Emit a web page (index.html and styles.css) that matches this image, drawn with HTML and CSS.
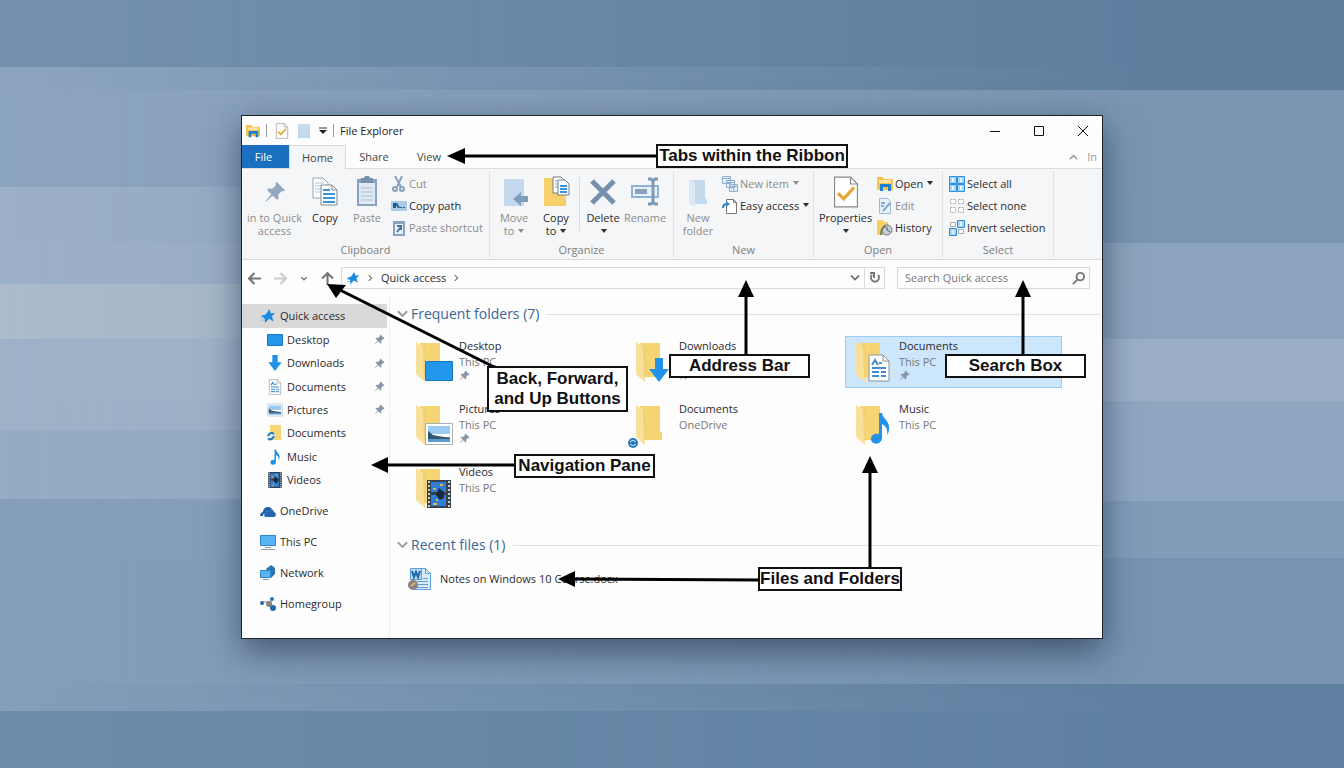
FILE: index.html
```html
<!DOCTYPE html>
<html lang="en">
<head>
  <meta charset="utf-8">
  <title>File Explorer</title>
  <link rel="stylesheet" href="styles.css">
</head>
<body>

  <!-- shared icons -->
  <svg class="defs" aria-hidden="true">
    <symbol id="pin" viewBox="0 0 24 24"><path fill="currentColor" d="M14 1L23 10L21 11.500L19.500 11L15.500 15L16 19L14 20.500L9.500 16L2 22.500L1.500 22L8 14.500L3.500 10L5 8L9 8.500L13 4.500L12.500 3Z"/></symbol>
    <symbol id="star" viewBox="0 0 16 16"><path fill="#1d8ce0" d="M9.500 1l1.200 4.200 4.500-.2-3.300 3.200 1.600 5.300-4.300-2.700-1.700 1.600L5 15l-.3-4.300L1 7.600l4.600-.9z"/><path stroke="#7dbdf0" d="M1 9.500h3M1 12h3"/></symbol>
    <symbol id="folder" viewBox="0 0 28 42"><path fill="#f5d473" d="M5 2h20v25l2 2v7H8z"/><path fill="#f9e09a" d="M1 1l7 5q2 1 2 4v31l-6-5q-3-2-3-4z"/><path fill="#e9c35d" d="M8 6h2v30H9z" opacity=".6"/></symbol>
    <symbol id="note" viewBox="0 0 20 32"><path fill="#2192e8" d="M9 1h3c1 6 8 8 7 16 0 3-1 4-2 6 1-6-1-9-5-11v13c0 9-11 8-11 2 0-5 5-6 8-5z"/></symbol>
    <symbol id="down" viewBox="0 0 20 24"><path fill="#2192e8" d="M6 0h8v11h6L10 24 0 11h6z"/></symbol>
    <symbol id="page" viewBox="0 0 22 28"><path fill="#fff" stroke="#8a929b" d="M1 1h14l6 6v20H1z"/><path fill="none" stroke="#8a929b" d="M15 1v6h6"/><path stroke="#3f8fd2" stroke-width="2" fill="none" d="M4 11l3-5 3 5M11 9h3M4 14h14M4 18h7M13 18h5M4 22h7M13 22h5"/></symbol>
    <symbol id="photo" viewBox="0 0 28 22"><path fill="#fff" stroke="#a9b1b9" d="M.5.5h27v21H.5z"/><path fill="#9ccbf2" d="M3 3h22v8H3z"/><path fill="#5b9dd0" d="M3 14h22v5H3z"/><path fill="#34596f" d="M3 8l5 4 5 1 12 2v1H3z"/></symbol>
    <symbol id="film" viewBox="0 0 24 28"><path fill="#37414e" d="M0 0h24v28H0z"/><path fill="#2f7fd6" d="M4 2h15v10H4zM4 15h15v11H4z"/><path stroke="#c8ced6" stroke-width="2" stroke-dasharray="2 2" d="M2 1v27M22 1v27"/><path stroke="#e8b04a" stroke-width="2" d="M6 9h3M13 5h3M9 20h2M14 17h3M6 24h4"/><path fill="#1c2938" d="M12 8l5 4v6l-4 2-4-5z"/></symbol>
    <symbol id="check" viewBox="0 0 22 28"><path fill="#fff" stroke="#888" d="M1 1h14l6 6v20H1z"/><path fill="none" stroke="#888" d="M15 1v6h6"/><path fill="none" stroke="#e5a83c" stroke-width="3" d="M4 15l5 5 9-10"/></symbol>
    <symbol id="chev" viewBox="0 0 12 8"><path fill="none" stroke="currentColor" stroke-width="2" d="M1 1l5 5 5-5"/></symbol>
    <symbol id="explorer" viewBox="0 0 16 16"><path fill="#f3c54f" d="M0 1h6l1 2h9v11H0z"/><path fill="#fae3a0" d="M2 4h12v3H2z"/><path fill="#1d7fd3" d="M3 8h11v7h-3v-4H6v4H3z"/></symbol>
    <symbol id="docs" viewBox="0 0 28 32"><path fill="#fff" stroke="#9aa3ad" d="M2 2h10l5 5v15H2z"/><path stroke="#a9c3dd" d="M4 7h9M4 10h10M4 13h10M4 16h10"/><path fill="#fff" stroke="#7f8994" d="M10 9h11l5 5v15H10z"/><path fill="none" stroke="#7f8994" d="M21 9v5h5"/><path stroke="#3b93dc" stroke-width="2" d="M12 14h7M12 18h12M12 22h12M12 26h12"/></symbol>
  </svg>

  <main class="window">

    <header class="titlebar">
      <svg class="i14"><use href="#explorer"/></svg>
      <span class="bar"></span>
      <svg class="i14 tb-check"><use href="#check"/></svg>
      <svg class="i14 tb-new" viewBox="0 0 14 14"><path fill="#c5daee" d="M1 0h12v14H1z"/></svg>
      <svg class="tb-more" viewBox="0 0 8 8"><path stroke="#333" d="M0 1h8"/><path fill="#222" d="M0 3h8L4 7z"/></svg>
      <span class="bar"></span>
      <h1>File Explorer</h1>
      <div class="window-buttons">
        <button aria-label="Minimize"><svg viewBox="0 0 12 12"><path d="M1 6.500h10"/></svg></button>
        <button aria-label="Maximize"><svg viewBox="0 0 12 12"><path d="M1.500 1.500h9v9h-9z"/></svg></button>
        <button aria-label="Close"><svg viewBox="0 0 12 12"><path d="M1 1l10 10M11 1L1 11"/></svg></button>
      </div>
    </header>

    <nav class="tabs">
      <button class="tab tab-file">File</button>
      <button class="tab tab-active">Home</button>
      <button class="tab">Share</button>
      <button class="tab">View</button>
      <span class="tabs-end"><svg class="up-chev"><use href="#chev"/></svg>In</span>
    </nav>

    <section class="ribbon">
      <div class="group g-clipboard">
        <div class="tools">
          <button class="big wide off"><svg class="big-pin"><use href="#pin"/></svg>in to Quick access</button>
          <button class="big"><svg><use href="#docs"/></svg>Copy</button>
          <button class="big off"><svg viewBox="0 0 24 32"><path fill="#8ba3c0" d="M2 3h20v27H2z"/><path fill="#dfeaf5" d="M4 7h16v21H4z"/><path fill="#7990ab" d="M6 2h3l1-2h4l1 2h3v5H6z"/><path stroke="#a6bdd5" d="M6 12h12M6 16h12M6 20h12M6 24h12"/></svg>Paste</button>
          <div class="smalls">
            <button class="small off"><svg viewBox="0 0 16 16"><path fill="none" stroke="#88a3c0" stroke-width="2" d="M4 0l6 11M11 0L6 11"/><circle cx="4" cy="13" r="2" fill="none" stroke="#88a3c0" stroke-width="2"/><circle cx="11" cy="13" r="2" fill="none" stroke="#88a3c0" stroke-width="2"/></svg>Cut</button>
            <button class="small"><svg viewBox="0 0 16 16"><path fill="#a8cbea" d="M0 3h16v10H0z"/><path fill="#225a8c" d="M2 5h4l3 5H7L5 7v3H2zM9 9h2v1H9zM12 9h2v1h-2z"/></svg>Copy path</button>
            <button class="small off"><svg viewBox="0 0 16 16"><path fill="#8ba3c0" d="M2 1h12v15H2z"/><path fill="#e6eff8" d="M4 4h8v10H4z"/><path stroke="#4f7298" stroke-width="2" fill="none" d="M6 12l4-5M6 6h4v4"/></svg>Paste shortcut</button>
          </div>
        </div>
        <div class="group-name">Clipboard</div>
      </div>

      <div class="group g-organize">
        <div class="tools">
          <button class="big off"><svg viewBox="0 0 28 32"><path fill="#c3d8ec" d="M4 3h20v27H4z"/><path fill="#7f9cbb" d="M13 23l8-7v4h7v6h-7v4z"/></svg><span>Move<br>to <i class="caret"></i></span></button>
          <button class="big"><svg viewBox="0 0 28 32"><path fill="#f5d06c" d="M2 2h12v4h10v24H2z"/><path fill="#fff" stroke="#777f88" d="M11 1h8l3 3v13H11z"/><path stroke="#5da3df" d="M13 5h6M13 8h6M13 11h6"/><path fill="#fff" stroke="#777f88" d="M16 4h7l4 4v11H16z"/><path stroke="#3b93dc" stroke-width="2" d="M18 10h7M18 13h7M18 16h7"/></svg><span>Copy<br>to <i class="caret"></i></span></button>
          <span class="divider"></span>
          <button class="big"><svg viewBox="0 0 28 32"><path stroke="#7590ad" stroke-width="5" d="M3 5l22 22M25 5L3 27"/></svg><span>Delete<br><i class="caret"></i></span></button>
          <button class="big off"><svg viewBox="0 0 28 32"><path fill="#e8f1fa" stroke="#8fb3d6" stroke-width="2" d="M1 10h26v11H1z"/><path fill="#8aa3be" d="M4 13h12v5H4z"/><path fill="none" stroke="#7e99b6" stroke-width="3" d="M17 3h3l2 2 2-2h3M22 4v23M17 28h3l2-2 2 2h3"/></svg>Rename</button>
        </div>
        <div class="group-name">Organize</div>
      </div>

      <div class="group g-new">
        <div class="tools">
          <button class="big off"><svg viewBox="0 0 28 32"><path fill="#c5d9ed" d="M6 4h15v18l2 2v4H8z"/><path fill="#dbe8f5" d="M5 3l6 4v24l-6-3z"/></svg>New folder</button>
          <div class="smalls">
            <button class="small off"><svg viewBox="0 0 16 16"><path fill="#e5eff9" stroke="#8fb0d2" d="M.5.500h8v7h-8zM4.500 4.500h8v7h-8zM7.500 8.500h8v7h-8z"/><path stroke="#8fb0d2" d="M1 2.500h7M5 6.500h7M8 10.500h7M11.500 11v4"/></svg>New item <i class="caret"></i></button>
            <button class="small"><svg viewBox="0 0 16 16"><path fill="#fff" stroke="#777" d="M4.500 1.500h7l3 3v11h-10z"/><path fill="none" stroke="#777" d="M11.500 1.500v3h3"/><path fill="none" stroke="#3c83bf" stroke-width="2" d="M1 10c0-3 1-4 4-4"/><path fill="#3c83bf" d="M4 3l4 3-4 3z"/></svg>Easy access <i class="caret"></i></button>
          </div>
        </div>
        <div class="group-name">New</div>
      </div>

      <div class="group g-open">
        <div class="tools">
          <button class="big wide"><svg><use href="#check"/></svg><span>Properties<br><i class="caret"></i></span></button>
          <div class="smalls">
            <button class="small"><svg><use href="#explorer"/></svg>Open <i class="caret"></i></button>
            <button class="small off"><svg viewBox="0 0 16 16"><path fill="#e8f1fa" stroke="#9cbbdb" d="M2.500.500h8l3 3v12h-11z"/><path stroke="#86a7cb" stroke-width="2" d="M4 5h4M4 8h3M6 13l7-8"/></svg>Edit</button>
            <button class="small"><svg viewBox="0 0 16 16"><path fill="#f5cf62" d="M0 0h6l1 2h4v13H0z"/><circle cx="10" cy="10" r="5" fill="#c9d0d4" stroke="#70797f"/><path fill="none" stroke="#50585e" d="M10 7v3l3 2"/><path fill="none" stroke="#70797f" stroke-width="2" d="M4 15c0-5 1-8 5-9"/></svg>History</button>
          </div>
        </div>
        <div class="group-name">Open</div>
      </div>

      <div class="group g-select">
        <div class="tools">
          <div class="smalls">
            <button class="small"><svg viewBox="0 0 16 16"><path fill="#a9d5f8" stroke="#2d8ddb" d="M.5.500h7v7h-7zM8.500.500h7v7h-7zM.5 8.500h7v7h-7zM8.500 8.500h7v7h-7z"/><path fill="#e7f4fe" d="M3 2h2v4H3zM11 2h2v4h-2zM3 10h2v4H3zM11 10h2v4h-2z"/></svg>Select all</button>
            <button class="small"><svg viewBox="0 0 16 16"><path fill="#fff" stroke="#aaa" stroke-dasharray="2 1" d="M1.500 1.500h5v4h-5zM9.500 1.500h5v4h-5zM1.500 9.500h5v5h-5zM9.500 9.500h5v5h-5z"/></svg>Select none</button>
            <button class="small"><svg viewBox="0 0 16 16"><path fill="#fff" stroke="#aaa" d="M1.500 2.500h5v4h-5zM9.500 9.500h5v4h-5z"/><path fill="#a9d5f8" stroke="#2d8ddb" d="M8.500.500h7v7h-7zM.5 8.500h7v7h-7z"/><path fill="#e7f4fe" d="M11 2h2v4h-2zM3 10h2v4H3z"/></svg>Invert selection</button>
          </div>
        </div>
        <div class="group-name">Select</div>
      </div>
    </section>

    <section class="location">
      <div class="history">
        <button aria-label="Back"><svg viewBox="0 0 12 12"><path d="M12 6H1M6 1L1 6l5 5"/></svg></button>
        <button class="dim" aria-label="Forward"><svg viewBox="0 0 12 12"><path d="M0 6h11M6 1l5 5-5 5"/></svg></button>
        <button class="recent" aria-label="Recent locations"><svg viewBox="0 0 12 12"><path d="M2 4l4 4 4-4"/></svg></button>
        <button aria-label="Up"><svg viewBox="0 0 12 12"><path d="M6 12V1M1 6l5-5 5 5"/></svg></button>
      </div>
      <div class="address">
        <svg class="i14"><use href="#star"/></svg>
        <svg class="crumb-sep"><use href="#chev"/></svg>
        <a href="#">Quick access</a>
        <svg class="crumb-sep"><use href="#chev"/></svg>
        <button class="drop" aria-label="Previous locations"><svg><use href="#chev"/></svg></button>
        <button class="refresh" aria-label="Refresh"><svg viewBox="0 0 14 14"><path d="M4 4a4 4 0 1 0 6 0M2 2h4v5"/></svg></button>
      </div>
      <label class="search">
        <input type="text" placeholder="Search Quick access" aria-label="Search Quick access">
        <svg viewBox="0 0 14 14"><circle cx="9" cy="5" r="4"/><path d="M6 8l-5 5"/></svg>
      </label>
    </section>

    <div class="panes">
      <nav class="sidebar">
        <a href="#" class="quick"><svg><use href="#star"/></svg>Quick access</a>
        <div class="pinned">
          <a href="#"><svg viewBox="0 0 16 16"><path fill="#2196ea" stroke="#1778c2" d="M.5 2.500h15v11H.5z"/></svg>Desktop<svg class="pin"><use href="#pin"/></svg></a>
          <a href="#"><svg><use href="#down"/></svg>Downloads<svg class="pin"><use href="#pin"/></svg></a>
          <a href="#"><svg><use href="#page"/></svg>Documents<svg class="pin"><use href="#pin"/></svg></a>
          <a href="#"><svg><use href="#photo"/></svg>Pictures<svg class="pin"><use href="#pin"/></svg></a>
          <a href="#"><svg viewBox="0 0 16 16"><path fill="#f7d774" d="M3 0h11v13l1 2H3z"/><circle cx="4" cy="11" r="4" fill="#dcebf7"/><path fill="none" stroke="#2a78b8" stroke-width="2" d="M1 11c1-3 4-4 6-2M7 11c-1 3-3 4-6 3"/></svg>Documents</a>
          <a href="#"><svg><use href="#note"/></svg>Music</a>
          <a href="#"><svg><use href="#film"/></svg>Videos</a>
        </div>
        <div class="roots">
          <a href="#"><svg viewBox="0 0 16 16"><path fill="#1f5fa6" d="M0 13c0-3 2-4 3-4 0-4 5-7 9-3l-3 1c-2 1-3 2-3 3-2 0-3 1-3 3z"/><path fill="#2467b0" d="M5 14c-2-3 0-5 2-5 1-4 6-4 7 0 3 1 2 5 0 5z"/></svg>OneDrive</a>
          <a href="#"><svg viewBox="0 0 16 16"><path fill="#58b4f5" stroke="#2f86cc" d="M.5 1.500h15v10H.5z"/><path stroke="#8d9aa6" d="M5 13.500h6M1 15.500h14"/></svg>This PC</a>
          <a href="#"><svg viewBox="0 0 16 16"><path fill="#2c74b4" d="M6 4l5-4 4 3v6l-4 4z"/><path fill="#5cb2ee" stroke="#2f86cc" d="M.5 5.500h10v7H.5z"/><path stroke="#8d9aa6" d="M3 14.500h6"/></svg>Network</a>
          <a href="#"><svg viewBox="0 0 16 16"><path stroke="#88a" d="M3 6l7 0M11 2v8"/><circle cx="2" cy="7" r="2" fill="#2268a8"/><circle cx="12" cy="3" r="2" fill="#2a75b8"/><circle cx="9" cy="8" r="3" fill="#8a8580"/><circle cx="13" cy="12" r="3" fill="#2268a8"/></svg>Homegroup</a>
        </div>
      </nav>

      <section class="content">
        <h2><svg><use href="#chev"/></svg>Frequent folders (7)</h2>
        <div class="folders">
          <a href="#" class="folder">
            <span class="thumb"><svg class="base"><use href="#folder"/></svg><svg class="badge screen" viewBox="0 0 28 20"><path fill="#2196ea" stroke="#1778c2" d="M.5.500h27v19H.5z"/></svg></span>
            <span class="info">Desktop<small>This PC</small><svg class="pin"><use href="#pin"/></svg></span>
          </a>
          <a href="#" class="folder">
            <span class="thumb"><svg class="base"><use href="#folder"/></svg><svg class="badge arrow"><use href="#down"/></svg></span>
            <span class="info">Downloads<small>&nbsp;</small><svg class="pin"><use href="#pin"/></svg></span>
          </a>
          <a href="#" class="folder selected">
            <span class="thumb"><svg class="base"><use href="#folder"/></svg><svg class="badge doc"><use href="#page"/></svg></span>
            <span class="info">Documents<small>This PC</small><svg class="pin"><use href="#pin"/></svg></span>
          </a>
          <a href="#" class="folder">
            <span class="thumb"><svg class="base"><use href="#folder"/></svg><svg class="badge screen"><use href="#photo"/></svg></span>
            <span class="info">Pictures<small>This PC</small><svg class="pin"><use href="#pin"/></svg></span>
          </a>
          <a href="#" class="folder">
            <span class="thumb"><svg class="base"><use href="#folder"/></svg><svg class="badge sync" viewBox="0 0 10 10"><circle cx="5" cy="5" r="5" fill="#2a78b8"/><path fill="none" stroke="#fff" d="M2 4c2-2 4-2 6 0M8 6c-2 2-4 2-6 0"/></svg></span>
            <span class="info">Documents<small>OneDrive</small></span>
          </a>
          <a href="#" class="folder">
            <span class="thumb"><svg class="base"><use href="#folder"/></svg><svg class="badge music"><use href="#note"/></svg></span>
            <span class="info">Music<small>This PC</small></span>
          </a>
          <a href="#" class="folder">
            <span class="thumb"><svg class="base"><use href="#folder"/></svg><svg class="badge movie"><use href="#film"/></svg></span>
            <span class="info">Videos<small>This PC</small></span>
          </a>
        </div>

        <h2 class="recent-title"><svg><use href="#chev"/></svg>Recent files (1)</h2>
        <a href="#" class="file">
          <svg viewBox="0 0 24 24"><path fill="#d9ebf9" stroke="#5d9fd6" d="M6.500 1.500h11l5 5v16h-16z"/><path fill="none" stroke="#5d9fd6" d="M17.500 1.500v5h5M9 14.500h11M9 17.500h11M9 20.500h11M15 11.500h5"/><path fill="#bcdcf6" stroke="#5d9fd6" d="M2.500 1.500h11v11h-11z"/><path fill="none" stroke="#1c66ab" stroke-width="2" d="M4 4l2 6 2-5 2 5 2-6"/><circle cx="5" cy="18" r="5" fill="#848484"/><path stroke="#e4b863" stroke-width="2" d="M3 19l4-3"/></svg>
          Notes on Windows 10 Course.docx
        </a>
      </section>
    </div>

    <!-- callouts drawn over the window -->
    <svg class="arrows" width="860" height="523" viewBox="0 0 860 523">
      <path class="line" d="M220 40H415M98 174L254 252M504 178V240M781 178V240M628 354V452M330 463L517 464M144 349H273"/>
      <path d="M205 40l18-8v16zM85 168l19 1-10 13zM504 164l-8 17h16zM781 164l-8 17h16zM628 340l-8 17h16zM316 463l17-8v16zM129 349l17-8v16z"/>
    </svg>
    <div class="callout c-tabs">Tabs within the Ribbon</div>
    <div class="callout c-back">Back, Forward,<br>and Up Buttons</div>
    <div class="callout c-address">Address Bar</div>
    <div class="callout c-search">Search Box</div>
    <div class="callout c-nav">Navigation Pane</div>
    <div class="callout c-files">Files and Folders</div>
  </main>

</body>
</html>
```
FILE: styles.css
```css
* {
  box-sizing: border-box;
}

body {
  position: relative;
  min-height: 100vh;
  margin: 0;
  padding: 115px 241px 60px;
  font: 11px/16px "Open Sans", "Noto Sans", sans-serif;
  color: #2b2b2b;
  background: linear-gradient(#7591af 67px, #8da5c0 67px 187px, #9cb0c8 187px 284px, #acbccd 284px 339px, #9fb2c8 339px 430px, #96abc4 430px 499px, #859fbb 499px 711px, #6d8dab 711px);
}

/* right hand stripes, faded in over the left ones */
body::before {
  content: "";
  position: absolute;
  inset: 0;
  background: linear-gradient(#5e7e9e 90px, #7a95b1 90px 243px, #8ba3bc 243px 339px, #9aafc5 339px 401px, #8fa6c0 401px 501px, #819cb9 501px 558px, #7793b1 558px 684px, #5f80a1 684px);
  mask-image: linear-gradient(to right, transparent, #000 85%);
}

a {
  color: inherit;
  text-decoration: none;
}

button {
  padding: 0;
  border: 0;
  background: none;
  font: inherit;
  color: inherit;
}

svg {
  flex: none;
}

.defs {
  position: absolute;
  width: 0;
  height: 0;
}

.window {
  position: relative;
  border: 1px solid #1d232b;
  background: #fdfdfd;
  box-shadow: 0 12px 32px rgba(25, 42, 68, .6);
}

/* title bar */
.titlebar {
  display: flex;
  align-items: center;
  gap: 6px;
  height: 29px;
  padding: 0 9px 0 4px;
}

.titlebar h1 {
  margin: 0;
  font-size: 11px;
  font-weight: normal;
  color: #222;
}

.i14 {
  width: 14px;
  height: 14px;
}

.tb-check {
  height: 16px;
  margin: 0 2px;
}

.tb-more {
  width: 8px;
  height: 8px;
  margin: 0 0 0 2px;
}

.bar {
  width: 1px;
  height: 13px;
  background: #999;
}

.window-buttons {
  display: flex;
  gap: 24px;
  margin-left: auto;
}

.window-buttons button {
  width: 20px;
  height: 20px;
}

.window-buttons svg {
  display: block;
  width: 12px;
  margin: auto;
  fill: none;
  stroke: #111;
}

/* tabs */
.tabs {
  display: flex;
  height: 24px;
  border-bottom: 1px solid #dadbdc;
}

.tab {
  width: 54px;
  margin-left: 1px;
  color: #444;
}

.tab-file {
  width: 47px;
  margin: 0;
  padding-right: 4px;
  background: #1a6fc0;
  color: #fff;
}

.tab-active {
  width: 57px;
  height: 24px;
  margin: 0;
  border: 1px solid #dadbdc;
  border-bottom: 0;
  background: #f5f6f7;
}

.tabs-end {
  display: flex;
  align-items: center;
  gap: 9px;
  margin-left: auto;
  padding-right: 5px;
  color: #999;
}

.up-chev {
  width: 9px;
  height: 6px;
  transform: rotate(180deg);
}

/* ribbon */
.ribbon {
  display: flex;
  height: 91px;
  padding: 2px 0;
  border-bottom: 1px solid #dadbdc;
  background: #f5f6f7;
}

.group {
  border-right: 1px solid #e0e1e3;
}

.g-clipboard { width: 248px; }
.g-organize { width: 184px; }
.g-new { width: 140px; }
.g-open { width: 129px; }
.g-select { width: 111px; }

.tools {
  display: flex;
  height: 71px;
  padding-left: 3px;
}

.big {
  display: flex;
  flex-direction: column;
  align-items: center;
  width: 42px;
  padding-top: 5px;
  line-height: 13px;
}

.big.wide {
  width: 59px;
}

.g-open .big.wide {
  width: 57px;
}

.big svg {
  width: 28px;
  height: 32px;
  margin-bottom: 3px;
}

.big .big-pin {
  width: 22px;
  height: 22px;
  margin: 5px 0 8px;
  color: #94a9c2;
}

.off {
  color: #8c8c8c;
}

.smalls {
  padding: 2px 0 0 3px;
}

.small {
  display: flex;
  align-items: center;
  height: 22px;
  white-space: pre;
}

.small svg {
  width: 16px;
  height: 16px;
  margin-right: 2px;
}

.caret {
  display: inline-block;
  margin: 0 0 2px 1px;
  border: 3px solid transparent;
  border-top: 4px solid currentColor;
  border-bottom: 0;
}

.divider {
  width: 1px;
  height: 54px;
  margin: 6px 2px 0;
  background: #dcdddf;
}

.group-name {
  text-align: center;
  color: #808080;
}

/* address row */
.location {
  display: flex;
  gap: 12px;
  padding: 7px 12px 7px 6px;
}

.history {
  display: flex;
  align-items: center;
  gap: 13px;
  margin-right: -5px;
}

.history button,
.history svg {
  display: block;
  width: 13px;
  height: 13px;
}

.history svg,
.refresh svg,
.search svg {
  fill: none;
  stroke: #777;
  stroke-width: 2;
}

.history .recent,
.recent svg {
  width: 8px;
}

.history .dim svg {
  stroke: #ccc;
}

.address {
  display: flex;
  flex: 1;
  align-items: center;
  height: 22px;
  padding-left: 4px;
  border: 1px solid #d9d9d9;
}

.crumb-sep {
  width: 7px;
  height: 6px;
  margin: 0 7px;
  color: #777;
  transform: rotate(-90deg);
}

.drop {
  width: 18px;
  height: 20px;
  margin-left: auto;
}

.drop svg {
  display: block;
  width: 10px;
  height: 8px;
  margin: auto;
  color: #666;
}

.refresh {
  width: 20px;
  height: 20px;
  border-left: 1px solid #d9d9d9;
}

.refresh svg {
  display: block;
  width: 14px;
  margin: auto;
}

.search {
  display: flex;
  align-items: center;
  width: 193px;
  height: 22px;
  padding: 0 4px 0 7px;
  border: 1px solid #d9d9d9;
}

.search input {
  flex: 1;
  min-width: 0;
  padding: 0;
  border: 0;
  outline: 0;
  background: none;
  font: inherit;
}

.search input::placeholder {
  color: #777;
}

.search svg {
  width: 13px;
  height: 13px;
}

/* navigation pane */
.panes {
  display: flex;
}

.sidebar {
  width: 148px;
  padding: 8px 2px 19px 0;
  border-right: 1px solid #eee;
}

.sidebar a {
  display: flex;
  align-items: center;
  gap: 4px;
  padding-left: 18px;
}

.sidebar a svg {
  width: 16px;
  height: 16px;
}

.sidebar .quick {
  height: 24px;
  background: #d9d9d9;
}

.pinned {
  display: grid;
  grid-auto-rows: 1fr;
  height: 164px;
}

.sidebar .pinned a {
  padding-left: 25px;
}

.sidebar a .pin {
  margin-left: auto;
  margin-right: 2px;
}

.sidebar a .pin,
.info .pin {
  width: 11px;
  height: 11px;
  color: #8996a5;
}

.roots {
  margin-top: 3px;
}

.roots a {
  height: 31px;
}

/* folders and files */
.content {
  flex: 1;
  padding: 6px 2px 0 7px;
}

h2 {
  display: flex;
  align-items: center;
  margin: 0 0 10px;
  font-size: 14px;
  font-weight: normal;
  line-height: 24px;
  color: #3d6595;
}

h2 svg {
  width: 11px;
  height: 8px;
  margin-right: 3px;
  color: #999;
}

h2::after {
  content: "";
  flex: 1;
  height: 1px;
  margin-left: 7px;
  background: #dfe1e4;
}

.folders {
  display: grid;
  grid-template-columns: repeat(3, 217px);
  grid-auto-rows: 52px;
  gap: 11px 3px;
  padding-left: 8px;
}

.folder {
  display: flex;
  padding: 1px 9px;
  border: 1px solid transparent;
}

.folder.selected {
  border-color: #99cdf5;
  background: #cce6fc;
}

.thumb {
  position: relative;
  width: 44px;
  padding-top: 3px;
}

.base {
  width: 28px;
  height: 42px;
}

/* small picture laid over the folder */
.badge {
  position: absolute;
  left: 10px;
  bottom: 4px;
  width: 28px;
  height: 28px;
}

.badge.screen {
  height: 22px;
}

.badge.arrow {
  left: 14px;
  width: 20px;
  height: 24px;
}

.badge.music {
  left: 15px;
  width: 20px;
  height: 34px;
}

.badge.sync {
  left: -7px;
  bottom: 1px;
  width: 10px;
  height: 10px;
}

.info small {
  display: block;
  font-size: 11px;
  color: #777;
}

.info .pin {
  display: block;
}

.recent-title {
  margin-top: 19px;
}

.file {
  display: flex;
  align-items: center;
  gap: 8px;
  padding-left: 11px;
}

.file svg {
  width: 24px;
  height: 24px;
}

/* callouts */
.arrows,
.callout {
  position: absolute;
}

.arrows {
  top: 0;
  left: 0;
  pointer-events: none;
}

.line {
  fill: none;
  stroke: #000;
  stroke-width: 3;
}

.callout {
  width: 141px;
  border: 2px solid #111;
  background: #fff;
  font: bold 17px/20px "Liberation Sans", Arial, sans-serif;
  color: #111;
  text-align: center;
  white-space: nowrap;
}

.c-tabs { top: 28px; left: 414px; width: 192px; }
.c-back { top: 250px; left: 245px; padding: 1px 0; }
.c-address { top: 238px; left: 427px; }
.c-search { top: 238px; left: 703px; }
.c-nav { top: 338px; left: 272px; }
.c-files { top: 451px; left: 516px; width: 144px; }
```
